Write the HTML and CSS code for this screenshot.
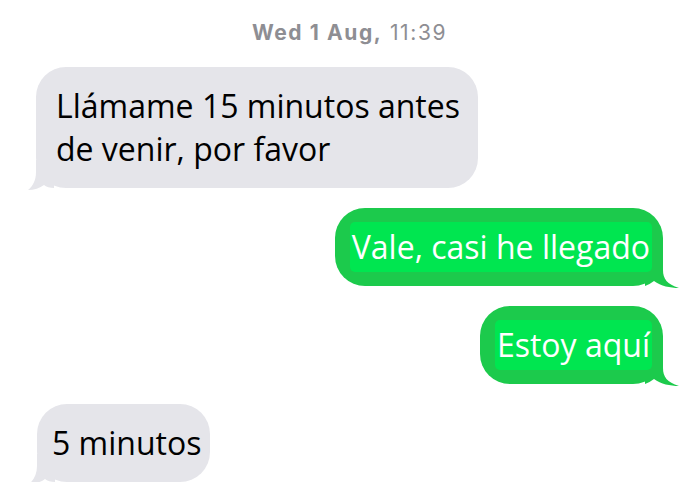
FILE: index.html
```html
<!DOCTYPE html>
<html>
<head>
    <meta charset="utf-8">
    <title>Mensajes</title>
    <link rel="stylesheet" href="styles.css">
</head>
<body>
    <main class="thread">
        <p class="stamp"><b>Wed 1 Aug,</b> 11:39</p>

        <div class="bubble in">
            <svg class="tail" viewBox="0 0 26 30"><path d="M8 0 L8 12 C8 20 5 26 0 30 C6 30 12 28 16 25 C18 27 22 28 26 28 L26 0 Z"/></svg>
            <span class="text">Llámame 15 minutos antes<br>de venir, por favor</span>
        </div>

        <div class="bubble out">
            <svg class="tail" viewBox="0 0 34 40"><path d="M0 0 L18 0 L18 22 C18 31 22 36 34 40 C25 40 16 38 9 33 C6 35 3 37 0 38 Z"/></svg>
            <span class="text pasted">Vale, casi he llegado</span>
        </div>

        <div class="bubble out">
            <svg class="tail" viewBox="0 0 34 40"><path d="M0 0 L18 0 L18 22 C18 31 22 36 34 40 C25 40 16 38 9 33 C6 35 3 37 0 38 Z"/></svg>
            <span class="text pasted">Estoy aquí</span>
        </div>

        <div class="bubble in short">
            <svg class="tail" viewBox="0 0 26 30"><path d="M8 0 L8 12 C8 20 5 26 0 30 C6 30 12 28 16 25 C18 27 22 28 26 28 L26 0 Z"/></svg>
            <span class="text">5 minutos</span>
        </div>
    </main>
</body>
</html>
```

FILE: styles.css
```css
html, body {
    margin: 0;
    background: #fff;
}

.thread {
    display: flex;
    flex-direction: column;
    gap: 20px;
    padding: 20px 37px 0 36px;
    font-family: "Open Sans", "Noto Sans", sans-serif;
}

.stamp {
    margin: 0 0 1px;
    text-align: center;
    font-family: Inter, "Liberation Sans", sans-serif;
    font-size: 21px;
    font-weight: 400;
    line-height: 26px;
    letter-spacing: 1.6px;
    color: #8e8e93;
}
.stamp b {
    font-weight: 700;
}

.bubble {
    position: relative;
    font-size: 32px;
    line-height: 43px;
    border-radius: 30px;
}

.bubble .tail {
    position: absolute;
}

.bubble .text {
    position: relative;
}

.in {
    align-self: flex-start;
    background: #e5e5ea;
    color: #000;
    padding: 17px 18px 18px 20px;
}
.in.short {
    margin-left: 1px;
    padding: 17px 9px 18px 15px;
}
.in .tail {
    left: -8px;
    bottom: -2px;
    width: 26px;
    height: 30px;
    fill: #e5e5ea;
}

.out {
    align-self: flex-end;
    background: #1cca4c;
    color: #fff;
    padding: 14px 11px 14px 15px;
}
.out .tail {
    right: -16px;
    bottom: -2px;
    width: 34px;
    height: 40px;
    fill: #1cca4c;
}

.pasted {
    display: inline-block;
    vertical-align: top;
    line-height: 50px;
    padding: 0 2px;
    border-radius: 5px;
    background: #00e650;
}
```
